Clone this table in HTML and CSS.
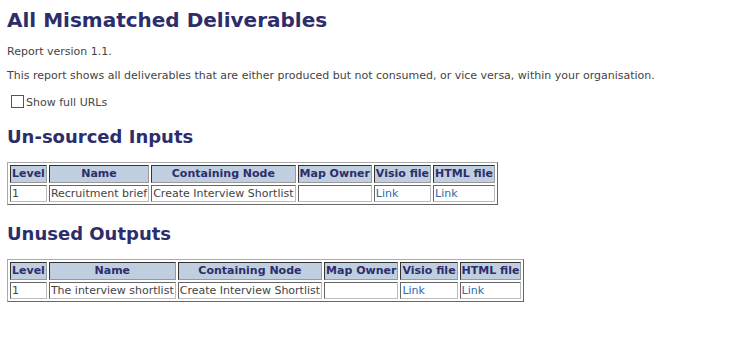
FILE: index.html
```html
<!DOCTYPE html>
<html>
<head>
<meta charset="utf-8">
<link rel="stylesheet" href="styles.css">
</head>
<body>
<h1 class="title">All Mismatched Deliverables</h1>
<p class="para first">Report version 1.1.</p>
<p class="para">This report shows all deliverables that are either produced but not consumed, or vice versa, within your organisation.</p>
<label class="check"><span class="box"></span>Show full URLs</label>
<h2 class="section">Un-sourced Inputs</h2>
<table class="grid">
<tr><th>Level</th><th>Name</th><th>Containing Node</th><th>Map Owner</th><th>Visio file</th><th>HTML file</th></tr>
<tr><td>1</td><td>Recruitment brief</td><td>Create Interview Shortlist</td><td></td><td><a href="#">Link</a></td><td><a href="#">Link</a></td></tr>
</table>
<h2 class="section second">Unused Outputs</h2>
<table class="grid">
<tr><th>Level</th><th>Name</th><th>Containing Node</th><th>Map Owner</th><th>Visio file</th><th>HTML file</th></tr>
<tr><td>1</td><td>The interview shortlist</td><td>Create Interview Shortlist</td><td></td><td><a href="#">Link</a></td><td><a href="#">Link</a></td></tr>
</table>
</body>
</html>
```
FILE: styles.css
```css
body {
  margin: 0;
  padding: 7px 7px;
  font-family: "DejaVu Sans", Verdana, sans-serif;
  font-size: 11px;
  color: #444;
  background: #fff;
}
.title {
  margin: 1px 0 0;
  font-size: 20px;
  line-height: 24px;
  color: #2d2d6b;
  font-weight: bold;
}
.para {
  margin: 10px 0 0;
  line-height: 14px;
}
.para.first {
  margin-top: 13px;
}
.check {
  display: flex;
  align-items: center;
  margin: 13px 0 0 4px;
  line-height: 14px;
}
.box {
  width: 11px;
  height: 11px;
  border: 1px solid #555;
  margin-right: 2px;
  margin-top: -3px;
}
.section {
  margin: 16px 0 0;
  font-size: 18px;
  line-height: 22px;
  color: #2d2d6b;
  font-weight: bold;
}
.section.second {
  margin-top: 18px;
}
.grid {
  margin-top: 14px;
  border: 1px solid;
  border-color: #aaa #666 #666 #aaa;
  border-spacing: 2px;
}
.grid th, .grid td {
  border: 1px solid;
  padding: 1px 1px;
  line-height: 13px;
  white-space: nowrap;
}
.grid th {
  background: #bfcfdf;
  color: #2d2d6b;
  font-weight: bold;
  line-height: 14px;
  border-color: #333 #999 #999 #333;
}
.grid td {
  text-align: left;
  border-color: #666 #bbb #bbb #666;
}
.grid a {
  color: #2a6aa8;
  text-decoration: none;
}
```
